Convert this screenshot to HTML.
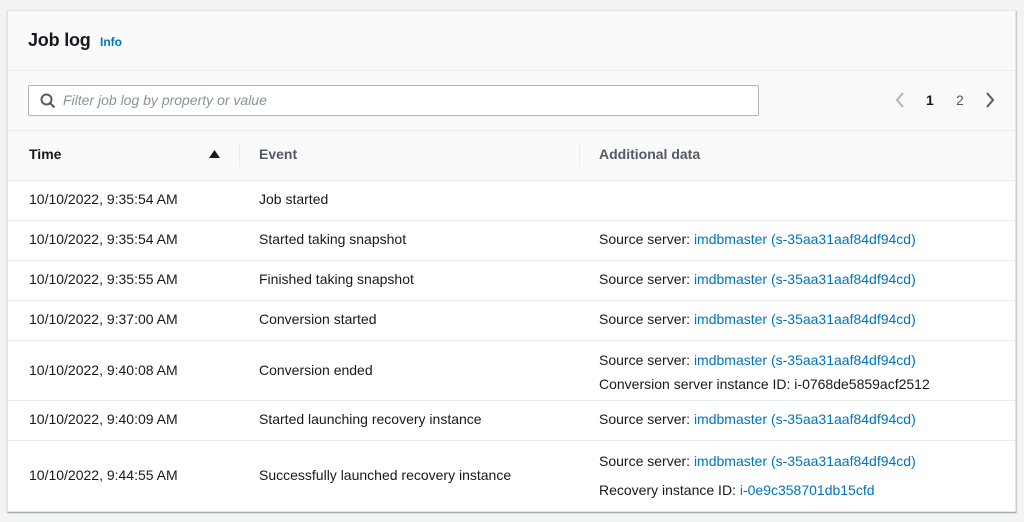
<!DOCTYPE html>
<html><head><style>
*{margin:0;padding:0;box-sizing:border-box}
body{width:1024px;height:522px;background:#f2f3f3;font-family:"Liberation Sans",sans-serif;color:#16191f;position:relative;overflow:hidden;font-size:14px}
.panel{position:absolute;left:7px;top:10px;width:1009px;height:502px;background:#fff;border:1px solid #e4e6e6;box-shadow:0 1px 1px rgba(0,28,36,.3),1px 1px 1px rgba(0,28,36,.15)}
.hdr{position:absolute;left:0;top:0;width:100%;height:60px;background:#fafafa;border-bottom:1px solid #eaeded}
.hdr h2{position:absolute;left:20px;top:19px;font-size:18px;font-weight:bold;letter-spacing:-.2px}
.hdr .info{position:absolute;left:92px;top:24px;font-size:12px;font-weight:bold;color:#0073bb}
.tools{position:absolute;left:0;top:60px;width:100%;height:60px;background:#fafafa;border-bottom:1px solid #eaeded}
.search{position:absolute;left:20px;top:14px;width:731px;height:31px;background:#fff;border:1px solid #aab7b8;border-radius:2px}
.search span{position:absolute;left:34px;top:6px;font-style:italic;color:#879596;font-size:14px}
.thead{position:absolute;left:0;top:120px;width:100%;height:50px;background:#fafafa;border-bottom:1px solid #eaeded;font-weight:bold;color:#545b64}
.thead div{position:absolute;top:15px}
.sep{position:absolute;top:12px;width:1px;height:24px;background:#eaeded}
.row{position:absolute;left:0;width:100%;border-bottom:1px solid #eaeded}
.row div{position:absolute}
a{color:#0073bb;text-decoration:none}
.c1{left:21px}.c2{left:251px}.c3{left:591px}
</style></head><body>
<div class="panel">
<div class="hdr"><h2>Job log</h2><span class="info">Info</span></div>
<div class="tools">
<div class="search"><svg style="position:absolute;left:11px;top:7px" width="16" height="16" viewBox="0 0 16 16"><circle cx="6.5" cy="6.5" r="5" fill="none" stroke="#545b64" stroke-width="2"/><line x1="10" y1="10" x2="14.5" y2="14.5" stroke="#545b64" stroke-width="2"/></svg><span>Filter job log by property or value</span></div>
<svg style="position:absolute;left:887px;top:21px" width="10" height="16" viewBox="0 0 10 16"><path d="M8 1L2 8l6 7" fill="none" stroke="#aab7b8" stroke-width="2"/></svg>
<div style="position:absolute;left:918px;top:21px;font-weight:bold">1</div>
<div style="position:absolute;left:948px;top:21px;color:#545b64">2</div>
<svg style="position:absolute;left:977px;top:21px" width="10" height="16" viewBox="0 0 10 16"><path d="M2 1l6 7-6 7" fill="none" stroke="#545b64" stroke-width="2"/></svg>
</div>
<div class="thead">
<div style="left:21px;color:#16191f">Time</div>
<svg style="position:absolute;left:201px;top:19px" width="11" height="8"><path d="M0 8L5.5 0 11 8z" fill="#16191f"/></svg>
<span class="sep" style="left:231px"></span>
<div style="left:251px">Event</div>
<span class="sep" style="left:571px"></span>
<div style="left:591px">Additional data</div>
</div>
<div class="row" style="top:170px;height:40px"><div class="c1" style="top:10px">10/10/2022, 9:35:54 AM</div><div class="c2" style="top:10px">Job started</div></div>
<div class="row" style="top:210px;height:40px"><div class="c1" style="top:10px">10/10/2022, 9:35:54 AM</div><div class="c2" style="top:10px">Started taking snapshot</div><div class="c3" style="top:10px">Source server: <a>imdbmaster (s-35aa31aaf84df94cd)</a></div></div>
<div class="row" style="top:250px;height:40px"><div class="c1" style="top:10px">10/10/2022, 9:35:55 AM</div><div class="c2" style="top:10px">Finished taking snapshot</div><div class="c3" style="top:10px">Source server: <a>imdbmaster (s-35aa31aaf84df94cd)</a></div></div>
<div class="row" style="top:290px;height:40px"><div class="c1" style="top:10px">10/10/2022, 9:37:00 AM</div><div class="c2" style="top:10px">Conversion started</div><div class="c3" style="top:10px">Source server: <a>imdbmaster (s-35aa31aaf84df94cd)</a></div></div>
<div class="row" style="top:330px;height:60px"><div class="c1" style="top:21px">10/10/2022, 9:40:08 AM</div><div class="c2" style="top:21px">Conversion ended</div><div class="c3" style="top:11px">Source server: <a>imdbmaster (s-35aa31aaf84df94cd)</a></div><div class="c3" style="top:35px">Conversion server instance ID: i-0768de5859acf2512</div></div>
<div class="row" style="top:390px;height:40px"><div class="c1" style="top:10px">10/10/2022, 9:40:09 AM</div><div class="c2" style="top:10px">Started launching recovery instance</div><div class="c3" style="top:10px">Source server: <a>imdbmaster (s-35aa31aaf84df94cd)</a></div></div>
<div class="row" style="top:430px;height:70px;border:none"><div class="c1" style="top:26px">10/10/2022, 9:44:55 AM</div><div class="c2" style="top:26px">Successfully launched recovery instance</div><div class="c3" style="top:12px">Source server: <a>imdbmaster (s-35aa31aaf84df94cd)</a></div><div class="c3" style="top:41px">Recovery instance ID: <a>i-0e9c358701db15cfd</a></div></div>
</div>
</body></html>
